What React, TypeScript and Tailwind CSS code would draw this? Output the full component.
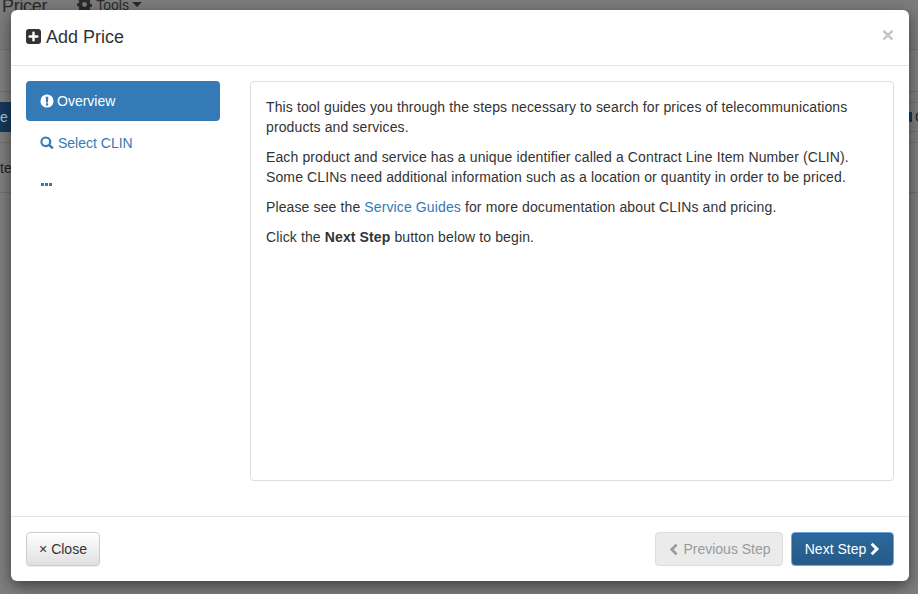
import { Plus } from "lucide-react";

function Glyph({ d, className }: { d: string; className: string }) {
  return (
    <svg viewBox="0 0 16 16" className={className} fill="currentColor" aria-hidden="true">
      <path d={d} fillRule="evenodd" />
    </svg>
  );
}

const EXCL = "M8 .5a7.5 7.5 0 1 0 0 15 7.5 7.5 0 0 0 0-15zM6.5 3h3l-.35 6.6h-2.3zM6.7 10.7h2.6v2.4H6.7z";
const SEARCH = "M6.6 .5a6.1 6.1 0 1 0 3.5 11.1l3.5 3.6 2-2-3.6-3.5A6.1 6.1 0 0 0 6.6.5zm0 2.3a3.8 3.8 0 1 1 0 7.6 3.8 3.8 0 0 1 0-7.6z";
const LEFT = "M10.6 .8 13 3.2 8.2 8l4.8 4.8-2.4 2.4L3.4 8z";
const RIGHT = "M5.4 .8 3 3.2 7.8 8 3 12.8l2.4 2.4L12.6 8z";
const GEAR = "M6.6 1h2.8l.3 1.8 1.3.6 1.5-1 2 2-1 1.5.5 1.3 1.9.4v2.8l-1.9.3-.5 1.3 1 1.5-2 2-1.5-1-1.3.5-.3 1.9H6.6l-.3-1.9-1.3-.5-1.5 1-2-2 1-1.5-.5-1.3L.1 9.4V6.6L2 6.3l.5-1.3-1-1.5 2-2 1.5 1 1.3-.6zM8 5.4a2.6 2.6 0 1 0 0 5.2 2.6 2.6 0 0 0 0-5.2z";

export default function App() {
  return (
    <div className="relative h-[594px] w-[918px] overflow-hidden bg-[#7f7f7f] font-['Liberation_Sans',Arial,sans-serif] text-[14px] leading-[20px] text-[#333333]">
      {/* dimmed page behind the dialog */}
      <div className="flex h-[50px] items-start border-b border-[#707070] bg-[#7c7c7c] text-[#2a2a2a]">
        <span className="mt-[-6px] ml-[2px] text-[18px] leading-[24px] tracking-[-0.3px]">Pricer</span>
        <Glyph d={GEAR} className="ml-[30px] mt-[-3px] h-[15px] w-[15px]" />
        <span className="ml-[4px] mt-[-5px] text-[14px]">Tools</span>
        <span className="ml-[3px] mt-[2px] h-0 w-0 border-x-[5px] border-t-[5px] border-x-transparent border-t-[#2a2a2a]" />
      </div>
      <div className="h-[42px] border-b border-[#707070]" />
      <div className="mt-[10px] flex h-[30px] items-center justify-between border-b border-t border-[#707070]">
        <div className="flex h-[30px] w-[20px] items-center bg-[#153a5c] text-[#b5c4d2]">e</div>
        <div className="flex items-center gap-[3px] text-[#222]">
          <span className="h-[10px] w-[6px] rounded-l-full bg-[#153a5c]" />
          <span className="w-[3px]">C</span>
        </div>
      </div>
      <div className="mt-[10px] flex h-[51px] items-center border-b border-t border-[#707070] text-[#222]">te</div>

      <div className="absolute left-[11px] top-[10px] flex h-[571px] w-[898px] flex-col rounded-[6px] bg-white shadow-[0_5px_15px_rgba(0,0,0,0.5)]">
        <header className="flex h-[56px] shrink-0 items-center justify-between border-b border-[#e5e5e5] px-[15px]">
          <h4 className="mb-[2px] flex items-center text-[18px] leading-[20px]">
            <span className="mr-[5px] flex h-[15px] w-[15px] items-center justify-center rounded-[3px] bg-[#333333]">
              <Plus className="h-[13px] w-[13px] text-white" strokeWidth={4.5} />
            </span>
            Add Price
          </h4>
          <span className="mb-[6px] text-[21px] font-bold leading-none text-[#c4c4c4]">×</span>
        </header>

        <main className="flex min-h-0 flex-1 gap-[30px] p-[15px]">
          <nav className="flex w-[194px] shrink-0 flex-col gap-[2px]">
            <a className="flex h-[40px] items-center rounded-[4px] bg-[#337ab7] pl-[14px] text-white">
              <Glyph d={EXCL} className="mr-[3px] h-[14px] w-[14px]" />
              Overview
            </a>
            <a className="flex h-[40px] items-center pl-[14px] text-[#337ab7]">
              <Glyph d={SEARCH} className="mr-[4px] h-[14px] w-[14px]" />
              Select CLIN
            </a>
            <a className="flex h-[38px] items-center gap-[1px] pl-[15px]">
              <span className="h-[3px] w-[3px] bg-[#337ab7]" />
              <span className="h-[3px] w-[3px] bg-[#337ab7]" />
              <span className="h-[3px] w-[3px] bg-[#337ab7]" />
            </a>
          </nav>
          <section className="h-[400px] w-[644px] rounded-[4px] border border-[#dddddd] p-[15px] tracking-[0.12px]">
            <p className="mb-[10px]">
              This tool guides you through the steps necessary to search for prices of telecommunications products and services.
            </p>
            <p className="mb-[10px]">
              Each product and service has a unique identifier called a Contract Line Item Number (CLIN). Some CLINs need additional information such as a location or quantity in order to be priced.
            </p>
            <p className="mb-[10px]">
              Please see the <a className="text-[#337ab7]">Service Guides</a> for more documentation about CLINs and pricing.
            </p>
            <p>
              Click the <strong>Next Step</strong> button below to begin.
            </p>
          </section>
        </main>

        <footer className="flex h-[65px] shrink-0 items-center justify-between border-t border-[#e5e5e5] px-[15px]">
          <button className="h-[34px] w-[74px] rounded-[4px] border border-[#cccccc] bg-gradient-to-b from-white to-[#e0e0e0] text-[#333333] shadow-[inset_0_1px_0_rgba(255,255,255,0.15),0_1px_1px_rgba(0,0,0,0.075)]">
            × Close
          </button>
          <div className="flex gap-[8px]">
            <button className="flex h-[34px] w-[128px] items-center justify-center rounded-[4px] border border-[#dddddd] bg-[#ebebeb] text-[#9a9a9a]">
              <Glyph d={LEFT} className="mr-[3px] h-[13px] w-[13px]" />
              Previous Step
            </button>
            <button className="flex h-[34px] w-[103px] items-center justify-center rounded-[4px] border border-[#6ea3e6] bg-gradient-to-b from-[#2c699d] to-[#265a88] pl-[2px] text-white shadow-[inset_0_0_0_1px_#2a5f8f]">
              Next Step
              <Glyph d={RIGHT} className="ml-[2px] h-[14px] w-[14px]" />
            </button>
          </div>
        </footer>
      </div>
    </div>
  );
}
